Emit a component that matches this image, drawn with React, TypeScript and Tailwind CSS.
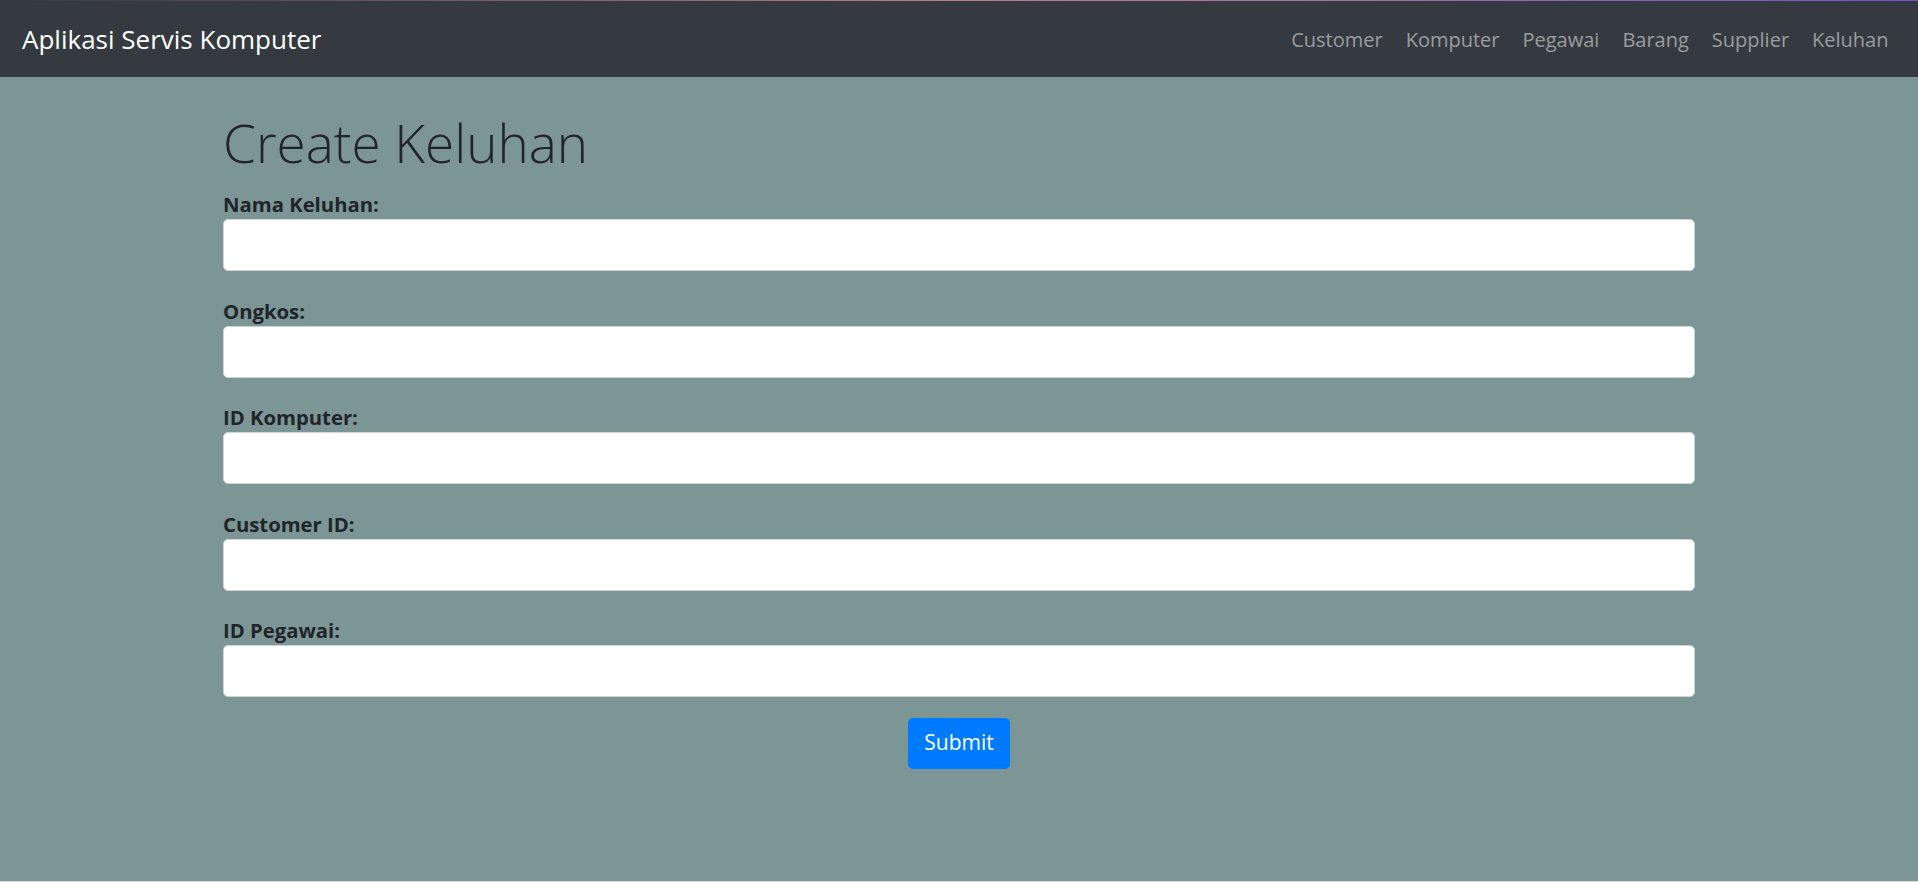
const links = ["Customer", "Komputer", "Pegawai", "Barang", "Supplier", "Keluhan"];

const fields = ["Nama Keluhan:", "Ongkos:", "ID Komputer:", "Customer ID:", "ID Pegawai:"];

export default function App() {
  return (
    <div
      className="flex h-[882px] flex-col bg-[#7c9696] text-[#212529]"
      style={{ fontFamily: '"Open Sans", "Noto Sans", sans-serif' }}
    >
      {/* navbar */}
      <div className="h-px bg-gradient-to-r from-[#343a40] via-[#c47a8a] to-[#7b50c8]" />
      <nav className="flex h-[76px] items-center justify-between bg-[#343a40] pr-[18px] pl-[22px]">
        <a className="text-[26px] leading-[40px] text-white">Aplikasi Servis Komputer</a>
        <ul className="flex">
          {links.map((l) => (
            <li key={l} className="px-[11.5px] text-[20px] leading-[33px] text-white/50">
              {l}
            </li>
          ))}
        </ul>
      </nav>

      {/* form */}
      <div className="mx-auto w-[1472px] flex-1 pt-[33px]">
        <h1 className="mb-[10px] text-[53px] leading-[66px] font-light">Create Keluhan</h1>
        <form className="flex flex-col">
          {fields.map((f) => (
            <div key={f} className="mb-[21.5px] flex flex-col">
              <label className="pt-[3px] text-[20.3px] leading-[30px] font-bold">{f}</label>
              <input
                type="text"
                className="h-[52px] rounded-[5px] border border-[#ced4da] bg-white px-3"
              />
            </div>
          ))}
          <div className="-mt-[1px] flex justify-center">
            <button
              type="button"
              className="h-[51px] rounded-[5px] bg-[#007bff] px-[16px] text-[21px] text-white"
            >
              Submit
            </button>
          </div>
        </form>
      </div>
      <div className="h-px bg-[#d3d7d7]" />
    </div>
  );
}
